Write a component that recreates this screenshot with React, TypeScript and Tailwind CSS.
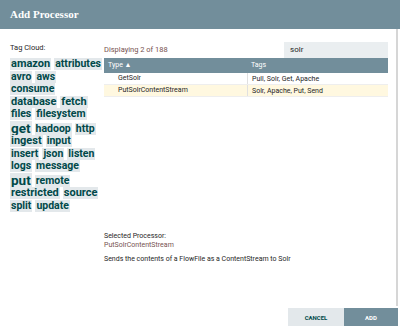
const tagRows: [string, string][][] = [
  [["amazon", "text-[11px]"], ["attributes", "text-[10.5px]"]],
  [["avro", "text-[10.5px]"], ["aws", "text-[10.5px]"]],
  [["consume", "text-[10.5px]"]],
  [["database", "text-[11px]"], ["fetch", "text-[11px]"]],
  [["files", "text-[10.5px]"], ["filesystem", "text-[10.5px]"]],
  [["get", "text-[13.5px] leading-[14px]"], ["hadoop", "text-[10.5px]"], ["http", "text-[10.5px]"]],
  [["ingest", "text-[11px]"], ["input", "text-[10.5px]"]],
  [["insert", "text-[10.5px]"], ["json", "text-[10.5px]"], ["listen", "text-[10.5px]"]],
  [["logs", "text-[10.5px]"], ["message", "text-[10.5px]"]],
  [["put", "text-[13.5px] leading-[14px]"], ["remote", "text-[10.5px]"]],
  [["restricted", "text-[11px]"], ["source", "text-[11px]"]],
  [["split", "text-[10.5px]"], ["update", "text-[10.5px]"]],
];

const rows = [
  { type: "GetSolr", tags: "Pull, Solr, Get, Apache", selected: false },
  { type: "PutSolrContentStream", tags: "Solr, Apache, Put, Send", selected: true },
];

function TagCloud() {
  return (
    <div className="w-[104px] shrink-0 pl-[10px] pt-[14px]">
      <div className="text-[7.5px] leading-[10px] text-[#262626]">Tag Cloud:</div>
      <div className="mt-[5px] flex flex-col gap-[0.5px]">
        {tagRows.map((row, i) => (
          <div key={i} className="flex items-end gap-[3px]">
            {row.map(([name, size]) => (
              <span
                key={name}
                className={`bg-[#e3e8eb] px-[1px] font-bold leading-[12px] text-[#004849] ${size}`}
              >
                {name}
              </span>
            ))}
          </div>
        ))}
      </div>
    </div>
  );
}

function ProcessorTable() {
  return (
    <div className="w-[284px] text-[7px]">
      <div className="flex h-[15px] items-center bg-[#728e9b] text-white">
        <div className="w-[143px] pl-[4px]">Type ▲</div>
        <div className="flex-1 pl-[4px]">Tags</div>
      </div>
      {rows.map((r) => (
        <div
          key={r.type}
          className={`flex h-[12px] items-center border-b border-[#eeeeee] text-[#262626] ${
            r.selected ? "bg-[#fff8e0]" : "bg-white"
          }`}
        >
          <div className="w-[143px] pl-[14px]">{r.type}</div>
          <div className="h-full flex-1 border-l border-[#e0e0e0] pl-[4px] leading-[12px]">{r.tags}</div>
        </div>
      ))}
    </div>
  );
}

export default function App() {
  return (
    <div className="flex h-[326px] w-[400px] flex-col overflow-hidden bg-white font-['Roboto',sans-serif]">
      <div className="flex h-[29px] shrink-0 items-center bg-[#728e9b] px-[10px]">
        <span className="font-['Liberation_Serif',serif] text-[11px] font-bold text-white">Add Processor</span>
      </div>
      <div className="mr-[2px] flex flex-1 border-r-[2px] border-[#d6d6d6]">
        <TagCloud />
        <div className="flex flex-col">
          <div className="mt-[12px] flex h-[17px] items-center justify-between">
            <span className="text-[7.5px] text-[#775351]">Displaying 2 of 188</span>
            <div className="flex h-[16px] w-[104px] items-center bg-[#eaeef0] pl-[6px] text-[8px] text-[#262626]">
              solr
            </div>
          </div>
          <ProcessorTable />
          <div className="mt-[135px] text-[7px] leading-[9px]">
            <div className="text-[#262626]">Selected Processor:</div>
            <div className="text-[#775351]">PutSolrContentStream</div>
            <div className="mt-[5px] text-[#262626]">Sends the contents of a FlowFile as a ContentStream to Solr</div>
          </div>
        </div>
      </div>
      <div className="flex h-[20px] shrink-0 justify-end pr-[2px]">
        <button className="mt-[2px] h-[18px] w-[56px] bg-[#e3e8eb] text-[6px] font-bold text-[#004849]">CANCEL</button>
        <button className="mt-[2px] h-[18px] w-[54px] bg-[#728e9b] text-[6px] font-bold text-white">ADD</button>
      </div>
    </div>
  );
}
